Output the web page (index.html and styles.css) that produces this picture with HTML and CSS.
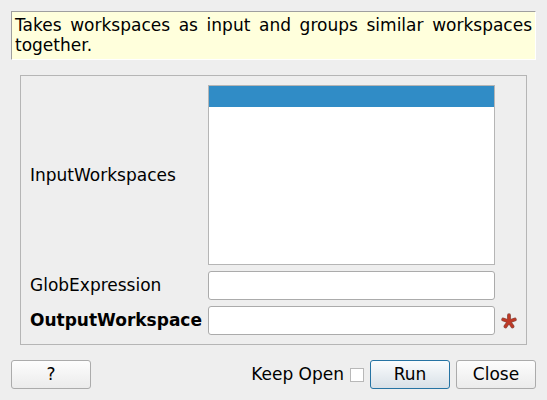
FILE: index.html
```html
<!DOCTYPE html>
<html lang="en">
<head>
<meta charset="utf-8">
<title>GroupWorkspaces</title>
<link rel="stylesheet" href="styles.css">
</head>
<body>
<form class="dialog">
  <p class="summary">Takes workspaces as input and groups similar workspaces together.</p>
  <div class="panel">
    <label for="inputs">InputWorkspaces</label>
    <select class="list" id="inputs" size="8" multiple>
      <option selected></option>
    </select>
    <span></span>
    <label for="glob">GlobExpression</label>
    <input class="field" id="glob" type="text">
    <span></span>
    <label class="required" for="output">OutputWorkspace</label>
    <input class="field" id="output" type="text" required>
    <svg class="star" viewBox="0 0 16 16" aria-hidden="true">
      <path class="star-edge" d="M8 8.500V2.200M8 8.500L2.200 6.500M8 8.500L13.800 6.500M8 8.500L4.500 13.400M8 8.500L11.500 13.400"/>
      <path class="star-fill" d="M8 8.500V2.200M8 8.500L2.200 6.500M8 8.500L13.800 6.500M8 8.500L4.500 13.400M8 8.500L11.500 13.400"/>
    </svg>
  </div>
  <div class="actions">
    <button class="button help" type="button">?</button>
    <label for="keep">Keep Open</label>
    <input class="check" id="keep" type="checkbox">
    <button class="button primary" type="button">Run</button>
    <button class="button" type="button">Close</button>
  </div>
</form>
</body>
</html>
```
FILE: styles.css
```css
* {
  box-sizing: border-box;
}

body {
  margin: 0;
  background: #eeeeee;
  color: #000;
  font: 17px/20px "DejaVu Sans", sans-serif;
}

.dialog {
  padding: 11px;
}

.summary {
  margin: 0 0 15px;
  padding: 3px 3px 4px;
  border: 1px solid;
  border-color: #9f9f9f #fff #fff #9f9f9f;
  background: #ffffdc;
  text-align: justify;
}

.panel {
  display: grid;
  grid-template-columns: auto 1fr 16px;
  gap: 6px;
  align-items: center;
  margin: 0 9px 15px;
  padding: 9px;
  border: 1px solid #b5b5b5;
}

label {
  padding-bottom: 1px;
}

.required {
  font-weight: bold;
}

.list,
.field {
  width: 100%;
  margin: 0;
  border: 1px solid #b5b5b5;
  background: #fff;
  font: inherit;
  outline: none;
}

.list {
  height: 180px;
  padding: 0;
  border-radius: 0;
  overflow: hidden;
}

.list option {
  height: 21px;
  min-height: 21px;
  padding: 0;
}

.list option:checked {
  background: #308cc6 linear-gradient(#308cc6, #308cc6);
}

.field {
  height: 29px;
  padding: 0 4px;
  border-color: #ababab;
  border-radius: 3px;
}

.star {
  width: 16px;
  height: 16px;
}

.star path {
  fill: none;
  stroke-linecap: round;
}

.star .star-edge {
  stroke: #8a5048;
  stroke-width: 3.8;
}

.star .star-fill {
  stroke: #bd3926;
  stroke-width: 2.600;
}

.actions {
  display: flex;
  align-items: center;
  gap: 6px;
}

.button {
  width: 80px;
  height: 29px;
  padding: 0 0 2px;
  border: 1px solid #ababab;
  border-radius: 3px;
  background: linear-gradient(#fdfdfd, #ebebeb);
  color: inherit;
  font: inherit;
}

.help {
  margin-right: auto;
}

.primary {
  border-color: #2573a3;
  background: linear-gradient(#fafcfd, #d8e0e7);
}

.check {
  appearance: none;
  width: 14px;
  height: 14px;
  margin: 0;
  border: 1px solid #b8b8b8;
  background: #fff;
}

.check:checked {
  background: #308cc6;
}
```
